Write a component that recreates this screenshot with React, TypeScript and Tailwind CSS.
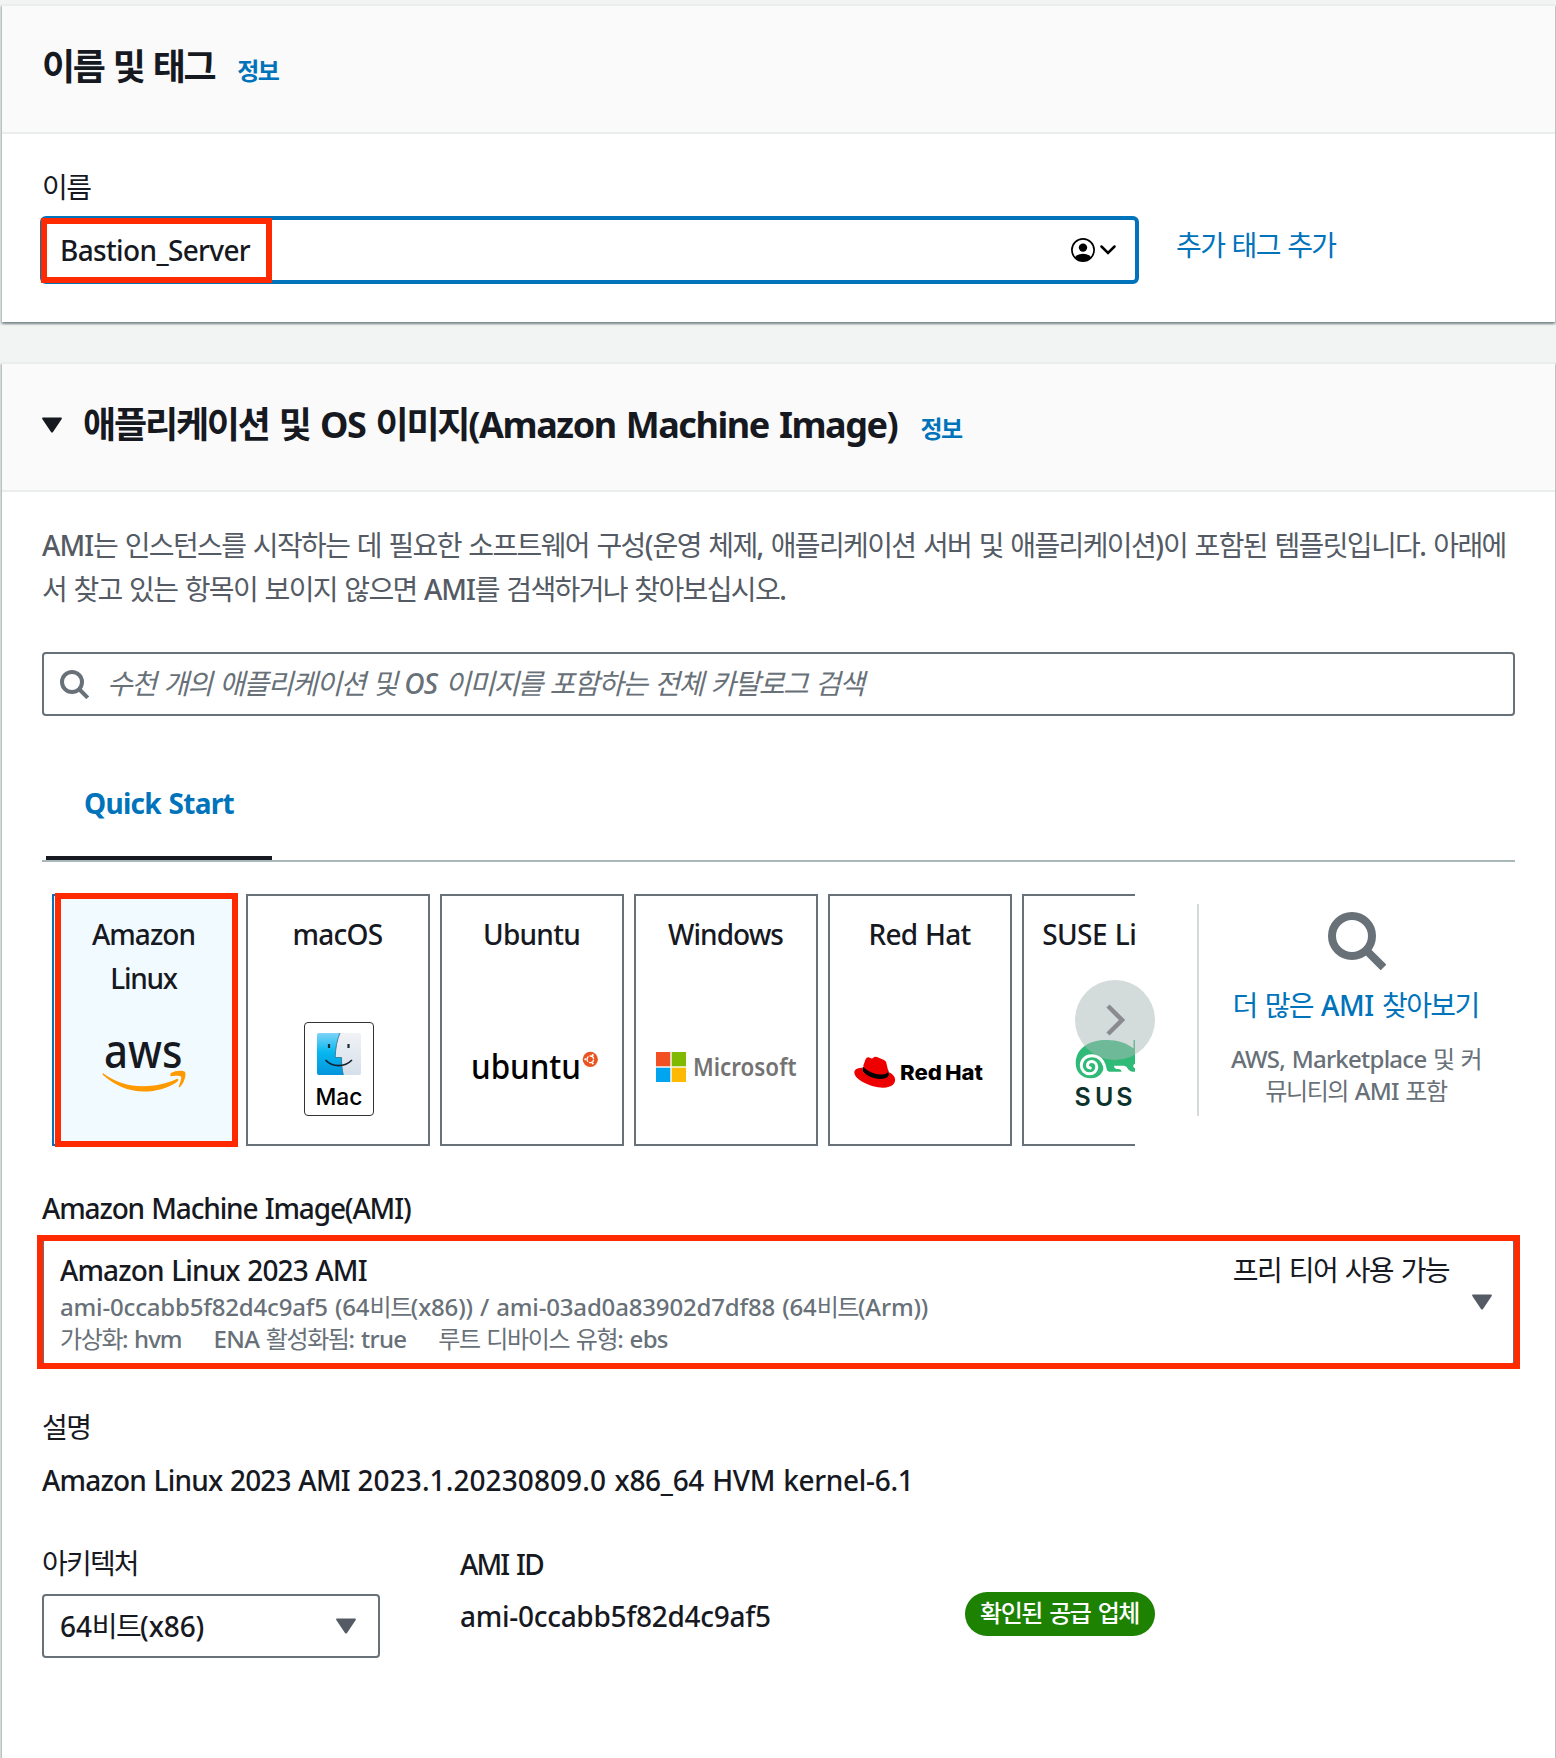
import React from "react";

const HANGUL = /([\uAC00-\uD7A3]+)/;

type TextProps = { children: string; className?: string; hangul?: string };

/** Text whose Hangul runs are set lighter and tighter than the Latin around them. */
function T({ children, className = "", hangul = "font-normal tracking-[-0.058em]" }: TextProps) {
  return (
    <span className={`whitespace-pre ${className}`}>
      {children.split(HANGUL).map((part, i) =>
        HANGUL.test(part) ? (
          <span key={i} className={hangul}>
            {part}
          </span>
        ) : (
          part
        ),
      )}
    </span>
  );
}

function Triangle({ className = "" }: { className?: string }) {
  return (
    <svg className={`h-4 w-5 shrink-0 ${className}`} viewBox="0 0 20 16" fill="currentColor">
      <path d="M1 0.500h18c.8 0 1.200.8.7 1.500L11 15c-.5.8-1.500.8-2 0L.3 2C-.2 1.300.2.5 1 .5z" />
    </svg>
  );
}

function SearchIcon({ className = "" }: { className?: string }) {
  return (
    <svg className={className} viewBox="0 0 58 58" fill="none" stroke="currentColor" strokeWidth="8">
      <circle cx="24" cy="24" r="20" />
      <path d="M38.500 38.500L55.500 55.500" />
    </svg>
  );
}

function Highlight({ className = "" }: { className?: string }) {
  return <div className={`pointer-events-none absolute border-[6px] border-[#ff2a00] ${className}`} />;
}

function AwsLogo() {
  return (
    <svg className="mx-auto h-[56px] w-[90px] overflow-visible" viewBox="0 0 90 56">
      <text x="5" y="32" fontSize="47" fontFamily="Noto Sans" fontWeight="500" fill="#16191f" textLength="78.500" lengthAdjust="spacingAndGlyphs">
        aws
      </text>
      <g transform="translate(1 0)" fill="#f90">
        <path d="M3.500 37.500C15 46 28 50.200 43 50.200c12 0 24-2.500 33.500-7.200 1.500-.6 2.700 1 1.300 2.200C69 52 56 55.500 44 55.500 28 55.500 14 49 3 39c-1-.8-.3-2.200.5-1.500z" />
        <path d="M70.500 37.300c4.500-3 13-3.200 14.500-1.300 1.500 2.200-.5 11-5 15-.7.7-1.500.3-1.200-.6 1-2.600 3.200-8.400 2.100-9.800-1-1.400-7-.8-9.700-.4-.9.1-1.200-.8-.7-1.500z" />
      </g>
    </svg>
  );
}

function MacLogo() {
  return (
    <div className="ml-[56px] flex h-[94px] w-[70px] flex-col items-center rounded-[4px] border border-[#333] pt-[10px]">
      <svg className="h-[42px] w-[44px]" viewBox="0 0 44 42">
        <defs>
          <linearGradient id="finderBlue" x1="0" y1="0" x2="0" y2="1">
            <stop offset="0" stopColor="#7fd4f8" />
            <stop offset="0.450" stopColor="#06b8ef" />
            <stop offset="1" stopColor="#0494dc" />
          </linearGradient>
          <linearGradient id="finderGrey" x1="0" y1="0" x2="0" y2="1">
            <stop offset="0" stopColor="#f1f2f6" />
            <stop offset="1" stopColor="#d5dfea" />
          </linearGradient>
        </defs>
        <rect width="44" height="42" rx="2" fill="url(#finderGrey)" />
        <path d="M2 0h21c-3 7-4.500 15-4.800 24.500H24.500c0 6 .5 12 1.800 17.500H2a2 2 0 0 1-2-2V2a2 2 0 0 1 2-2z" fill="url(#finderBlue)" />
        <path d="M23 0c-3 7-4.500 15-4.800 24.500H24.500c0 6 .5 12 1.800 17.500" fill="none" stroke="#2c6d93" strokeWidth="0.800" />
        <path d="M12 11v4M31.500 11v4" stroke="#1c2b38" strokeWidth="2.200" />
        <path d="M8.500 27c7 7.500 19 7.500 26.500 0" fill="none" stroke="#14202b" strokeWidth="1.600" />
      </svg>
      <svg className="mt-[8px] h-[26px] w-[50px] overflow-visible" viewBox="0 0 50 26">
        <text x="1.500" y="21.500" fontSize="23.500" fontFamily="Inter" fontWeight="500" textLength="47" lengthAdjust="spacingAndGlyphs">
          Mac
        </text>
      </svg>
    </div>
  );
}

function UbuntuLogo() {
  return (
    <svg className="h-[40px] w-[130px] overflow-visible" viewBox="0 0 130 40">
      <text x="1" y="33" fontSize="34" fontFamily="Noto Sans" fontWeight="500" textLength="110" lengthAdjust="spacingAndGlyphs">
        ubuntu
      </text>
      <circle cx="120.300" cy="13.300" r="7.600" fill="#e95420" />
      <circle cx="120.300" cy="13.300" r="3.300" fill="none" stroke="#fff" strokeWidth="1.300" strokeDasharray="5.700 1.210" strokeDashoffset="-0.600" />
      <circle cx="115.400" cy="13.300" r="1.100" fill="#fff" />
      <circle cx="122.700" cy="9.100" r="1.100" fill="#fff" />
      <circle cx="122.700" cy="17.500" r="1.100" fill="#fff" />
    </svg>
  );
}

function MicrosoftLogo() {
  return (
    <svg className="h-[36px] w-[142px] overflow-visible" viewBox="0 0 142 36">
      <path d="M0 3h14.300v14.300H0z" fill="#f25022" />
      <path d="M15.700 3H30v14.300H15.700z" fill="#7fba00" />
      <path d="M0 18.700h14.300V33H0z" fill="#00a4ef" />
      <path d="M15.700 18.700H30V33H15.700z" fill="#ffb900" />
      <text x="37" y="27" fontSize="25" fontFamily="Noto Sans" fontWeight="600" fill="#737373" textLength="103.500" lengthAdjust="spacingAndGlyphs">
        Microsoft
      </text>
    </svg>
  );
}

function RedHatLogo() {
  return (
    <svg className="h-[36px] w-[132px] overflow-visible" viewBox="0 0 132 36">
      <g transform="translate(0.300 -2.200) scale(1.700)">
        <path d="M5 9l-.4 1.500c.5 2.500 5 5.800 11 5.800 3 0 5-1.200 4.900-3l-.5-2.500z" fill="#000" />
        <path
          d="M16.009 13.386c1.577 0 3.860-.326 3.860-2.202a1.765 1.765 0 0 0-.04-.431l-.94-4.080c-.216-.898-.406-1.305-1.982-2.093-1.223-.625-3.888-1.658-4.676-1.658-.733 0-.947.946-1.822.946-.842 0-1.467-.706-2.255-.706-.757 0-1.250.515-1.630 1.576 0 0-1.060 2.990-1.197 3.424a.81.81 0 0 0-.028.245c0 1.162 4.577 4.974 10.710 4.974m4.101-1.435c.218 1.032.218 1.140.218 1.277 0 1.765-1.984 2.745-4.593 2.745-5.895.004-11.060-3.451-11.060-5.734a2.326 2.326 0 0 1 .19-.925C2.746 9.415 0 9.794 0 12.217c0 3.969 9.405 8.861 16.851 8.861 5.710 0 7.149-2.582 7.149-4.620 0-1.605-1.387-3.425-3.887-4.512"
          fill="#e00"
        />
      </g>
      <g fontFamily="Inter" fontSize="20.500" fontWeight="800">
        <text x="46" y="25.500" textLength="42" lengthAdjust="spacingAndGlyphs">
          Red
        </text>
        <text x="91" y="25.500" textLength="38" lengthAdjust="spacingAndGlyphs">
          Hat
        </text>
      </g>
    </svg>
  );
}

function SuseLogo() {
  return (
    <svg className="h-[72px] w-[90px] overflow-visible" viewBox="0 0 90 72">
      <path d="M.7 25C1 10 14 2 32 2c11 0 19 3 26.500 8.300V2H60l5 5c8 1 14 5 16 11v12l-4 3.700H57.500c-2.500-.5-4-1.700-5-3.400-1.300-2.200-2.500-2.600-5.500-2.600h-8c0 2.500 1.500 3.300 4 3.300 2.500.2 3.500 1.200 3.500 2.700H35c-2.500 0-4-2.500-6-6.500C29 35 23 40.300 16 40.300 6.500 40.300.6 33.500.7 25z" fill="#30ba78" />
      <path d="M30.500 33C29 22.500 23.500 17.800 16.500 17.800 10 17.800 6.300 22.500 6.300 27.500c0 4.800 3.700 8.300 8.300 8.300 4.200 0 7.200-3 7.200-6.700 0-3.300-2.500-5.600-5.300-5.600-2.500 0-4 1.700-4 3.600 0 1.700 1.300 2.800 2.800 2.800" fill="none" stroke="#fff" strokeWidth="3" strokeLinecap="round" />
      <path d="M60.500 30.500c-3-1.200-3-4 0-4.800z" fill="#fff" />
      <text x="-0.500 20 41.300 63" y="67.700" fontSize="25" fontFamily="Inter" fontWeight="600" fill="#0c322c">
        SUSE
      </text>
    </svg>
  );
}

function Tile({ children, logo, selected = false }: { children: React.ReactNode; logo: React.ReactNode; selected?: boolean }) {
  const tone = selected ? "border-[#0073bb] bg-[#f1faff]" : "border-[#687078] bg-white";
  return (
    <div className={`relative h-[252px] w-[184px] shrink-0 border-2 pt-[16px] ${tone}`}>
      <div className="pr-[1px] text-center">{children}</div>
      {logo}
    </div>
  );
}

function Header({ children }: { children: React.ReactNode }) {
  return (
    <header className="flex h-[130px] items-baseline border-y-2 border-[#eaeded] bg-[#fafafa] pt-[39px] pl-[40px] font-bold">
      {children}
    </header>
  );
}

const CARD =
  "ml-[2px] mr-[1px] bg-white shadow-[0_2px_2px_0_rgba(0,28,36,0.3),2px_2px_2px_0_rgba(0,28,36,0.15),-2px_2px_2px_0_rgba(0,28,36,0.15)]";

export default function App() {
  return (
    <div className="h-[1758px] overflow-hidden bg-[#f2f3f3] pt-[4px] font-['Noto_Sans','Noto_Sans_CJK_KR',sans-serif] text-[28px] leading-[44px] font-medium text-[#16191f] [word-spacing:0.04em]">
      <section className={`h-[318px] ${CARD}`}>
        <Header>
          <h2 className="text-[36px] [word-spacing:0]">
            <T hangul="tracking-[-0.068em]">이름 및 태그</T>
          </h2>
          <a className="ml-[23px] text-[24px] text-[#0073bb]">
            <T hangul="tracking-[-0.060em]">정보</T>
          </a>
        </Header>
        <div className="flex items-start pt-[31px] pl-[38px]">
          <div>
            <div className="pl-[2px]">
              <T>이름</T>
            </div>
            <div className="relative mt-[7px] flex h-[68px] w-[1099px] items-center justify-between rounded-[6px] border-4 border-[#0073bb] bg-white pr-[19px] pl-[16px]">
              <T className="pb-[1px] tracking-[-0.023em]">Bastion_Server</T>
              <div className="flex items-center">
                <svg className="h-6 w-6" viewBox="0 0 24 24">
                  <defs>
                    <clipPath id="person">
                      <circle cx="12" cy="12" r="11" />
                    </clipPath>
                  </defs>
                  <circle cx="12" cy="12" r="11.100" fill="none" stroke="#000" strokeWidth="1.700" />
                  <circle cx="12" cy="9.600" r="4.200" />
                  <ellipse cx="12" cy="22" rx="9" ry="6.200" clipPath="url(#person)" />
                </svg>
                <svg className="ml-[5px] h-[10px] w-4" viewBox="0 0 16 10" fill="none" stroke="#000" strokeWidth="2.500">
                  <path d="M1.500 1.500L8 8l6.500-6.500" strokeLinecap="round" />
                </svg>
              </div>
              <Highlight className="top-[-2px] left-[-3px] h-[65px] w-[231px]" />
            </div>
          </div>
          <a className="ml-[37px] pt-[58px] text-[#0073bb] [word-spacing:0]">
            <T>추가 태그 추가</T>
          </a>
        </div>
      </section>

      <section className={`mt-[40px] h-[1500px] ${CARD}`}>
        <Header>
          <Triangle className="mb-[44px] self-center" />
          <h2 className="ml-[21px] text-[36px] [word-spacing:0.06em]">
            <T className="tracking-[-0.040em]" hangul="tracking-[-0.060em]">
              애플리케이션 및 OS 이미지(Amazon Machine Image)
            </T>
          </h2>
          <a className="ml-[23px] text-[24px] text-[#0073bb]">
            <T hangul="tracking-[-0.060em]">정보</T>
          </a>
        </Header>

        <div className="px-[40px] pt-[31px]">
          <p className="flex flex-col text-[#545b64]">
            <T className="tracking-[-0.034em]">
              AMI는 인스턴스를 시작하는 데 필요한 소프트웨어 구성(운영 체제, 애플리케이션 서버 및 애플리케이션)이 포함된 템플릿입니다. 아래에
            </T>
            <T className="tracking-[-0.038em]">서 찾고 있는 항목이 보이지 않으면 AMI를 검색하거나 찾아보십시오.</T>
          </p>

          <div className="mt-[41px] flex h-[64px] items-center rounded-[4px] border-2 border-[#687078] pl-[16px] text-[#687078]">
            <SearchIcon className="h-[29px] w-[29px]" />
            <T className="ml-[18px] pb-[3px] tracking-[-0.026em] italic" hangul="font-normal tracking-[-0.055em]">
              수천 개의 애플리케이션 및 OS 이미지를 포함하는 전체 카탈로그 검색
            </T>
          </div>

          <div className="mt-[65px] border-b-2 border-[#aab7b8] pl-[4px]">
            <div className="h-[79px] w-[226px] border-b-4 border-[#16191f] pl-[38px] font-bold text-[#0073bb]">
              <T className="tracking-[-0.026em]">Quick Start</T>
            </div>
          </div>

          <div className="mt-[32px] flex pl-[10px]">
            <div className="relative w-[1083px]">
              <div className="flex gap-[10px] overflow-hidden">
                <Tile selected logo={<div className="mt-[36px]"><AwsLogo /></div>}>
                  <T className="block tracking-[-0.034em]">Amazon</T>
                  <T className="block tracking-[-0.044em]">Linux</T>
                </Tile>
                <Tile logo={<div className="mt-[66px]"><MacLogo /></div>}>
                  <T className="tracking-[-0.025em]">macOS</T>
                </Tile>
                <Tile logo={<div className="mt-[90px] pl-[28px]"><UbuntuLogo /></div>}>
                  <T className="tracking-[-0.027em]">Ubuntu</T>
                </Tile>
                <Tile logo={<div className="mt-[93px] pl-[20px]"><MicrosoftLogo /></div>}>
                  <T className="tracking-[-0.034em]">Windows</T>
                </Tile>
                <Tile logo={<div className="mt-[98px] pl-[24px]"><RedHatLogo /></div>}>
                  <T className="tracking-[-0.026em]">Red Hat</T>
                </Tile>
                <Tile logo={<div className="mt-[82px] pl-[51px]"><SuseLogo /></div>}>
                  <T className="tracking-[-0.020em]">SUSE Linux</T>
                </Tile>
              </div>
              <Highlight className="top-[-1px] left-[3px] h-[254px] w-[183px]" />
              <button className="absolute top-[86px] right-[-20px] flex h-20 w-20 items-center justify-center rounded-full bg-[#aab7b8]/50">
                <svg className="h-[32px] w-[20px]" viewBox="0 0 20 32" fill="none" stroke="#8a8b90" strokeWidth="4.500">
                  <path d="M3 2L17 16 3 30" />
                </svg>
              </button>
            </div>
            <div className="mt-[10px] ml-[62px] flex h-[212px] flex-1 flex-col items-center border-l-2 border-[#d5dbdb] pt-[8px]">
              <SearchIcon className="h-[58px] w-[58px] text-[#687078]" />
              <a className="mt-[13px] pr-[3px] text-[#0073bb]">
                <T className="tracking-[-0.012em]">더 많은 AMI 찾아보기</T>
              </a>
              <p className="mt-[16px] flex flex-col items-center pr-[2px] text-[24px] leading-[32px] text-[#687078]">
                <T className="tracking-[-0.031em]">AWS, Marketplace 및 커</T>
                <T className="tracking-[-0.031em]">뮤니티의 AMI 포함</T>
              </p>
            </div>
          </div>

          <div className="mt-[40px]">
            <T className="tracking-[-0.041em]">Amazon Machine Image(AMI)</T>
          </div>
          <div className="relative mt-[8px] flex h-[128px] items-start justify-between rounded-[4px] border-2 border-[#687078] pt-[8px] pr-[21px] pl-[16px]">
            <div className="flex flex-col">
              <T className="tracking-[-0.031em]">Amazon Linux 2023 AMI</T>
              <div className="mt-[-1px] flex flex-col text-[24px] leading-[32px] text-[#687078]">
                <T className="tracking-[-0.007em]">ami-0ccabb5f82d4c9af5 (64비트(x86)) / ami-03ad0a83902d7df88 (64비트(Arm))</T>
                <div className="flex gap-[32px]">
                  <T className="tracking-[-0.040em]">가상화: hvm</T>
                  <T className="tracking-[-0.030em]">ENA 활성화됨: true</T>
                  <T className="tracking-[-0.030em]">루트 디바이스 유형: ebs</T>
                </div>
              </div>
            </div>
            <div className="flex">
              <T className="[word-spacing:0.015em]">프리 티어 사용 가능</T>
              <Triangle className="mt-[46px] ml-[23px] text-[#545b64]" />
            </div>
            <Highlight className="top-[-5px] left-[-7px] h-[134px] w-[1483px]" />
          </div>

          <div className="mt-[39px]">
            <T>설명</T>
          </div>
          <div className="mt-[9px]">
            <T className="tracking-[-0.029em]">Amazon Linux 2023 AMI </T>
            <T className="tracking-[0.003em]">2023.1.20230809.0 </T>
            <T className="tracking-[-0.011em]">x86_64 HVM kernel-6.1</T>
          </div>

          <div className="mt-[39px] flex items-start">
            <div className="w-[418px]">
              <T hangul="font-normal tracking-[-0.065em]">아키텍처</T>
              <div className="mt-[9px] flex h-[64px] w-[338px] items-center justify-between rounded-[4px] border-2 border-[#687078] pr-[22px] pl-[16px]">
                <T className="pb-[1px] tracking-[-0.004em]">64비트(x86)</T>
                <Triangle className="text-[#545b64]" />
              </div>
            </div>
            <div className="w-[505px] pt-[1px]">
              <T className="tracking-[-0.066em] [word-spacing:0.08em]">AMI ID</T>
              <div className="mt-[8px]">
                <T className="tracking-[-0.010em]">ami-0ccabb5f82d4c9af5</T>
              </div>
            </div>
            <div className="mt-[51px] h-[44px] w-[190px] rounded-full bg-[#1d8102] pr-[1px] text-center text-[24px] leading-[41px] text-white">
              <T hangul="font-medium tracking-[-0.062em]">확인된 공급 업체</T>
            </div>
          </div>
        </div>
      </section>
    </div>
  );
}
